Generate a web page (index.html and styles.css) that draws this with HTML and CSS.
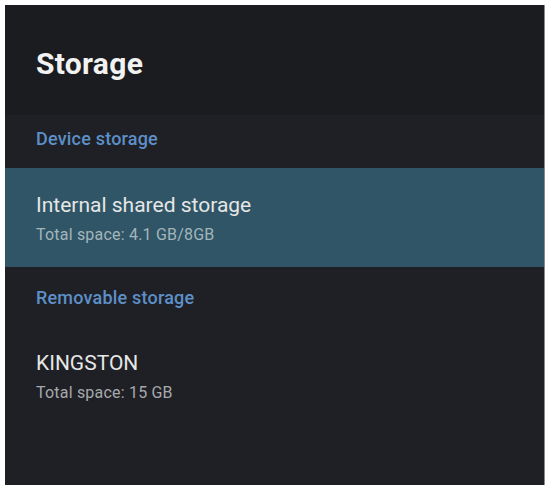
FILE: index.html
```html
<!DOCTYPE html>
<html>
<head>
<meta charset="utf-8">
<link rel="stylesheet" href="styles.css">
</head>
<body>
<div class="panel">
  <header class="header"><h1 class="title">Storage</h1></header>
  <div class="list">
    <div class="section section-first">Device storage</div>
    <div class="item item-active">
      <div class="item-title">Internal shared storage</div>
      <div class="item-sub">Total space: 4.1 GB/8GB</div>
    </div>
    <div class="section section-second">Removable storage</div>
    <div class="item">
      <div class="item-title">KINGSTON</div>
      <div class="item-sub">Total space: 15 GB</div>
    </div>
  </div>
</div>
</body>
</html>
```
FILE: styles.css
```css
html, body {
  margin: 0;
  padding: 0;
  background: #ffffff;
}
body {
  padding: 5px;
  font-family: Roboto, "Liberation Sans", sans-serif;
}
.panel {
  width: 540px;
  height: 480px;
  background: #1f2025;
  display: flex;
  flex-direction: column;
  border-right: 1px solid #8a8a8a;
  box-sizing: border-box;
}
.header {
  height: 110px;
  background: #1b1c1f;
  padding: 44px 0 0 31px;
  box-sizing: border-box;
}
.title {
  margin: 0;
  font-size: 30px;
  line-height: 30px;
  font-weight: 700;
  letter-spacing: 0.3px;
  color: #f2f2f2;
}
.list {
  display: flex;
  flex-direction: column;
}
.section {
  font-size: 18px;
  line-height: 24px;
  font-weight: 500;
  letter-spacing: 0.2px;
  color: #5d8fc8;
  padding-left: 31px;
  box-sizing: border-box;
}
.section-first {
  height: 53px;
  padding-top: 12px;
}
.section-second {
  height: 59px;
  padding-top: 19px;
}
.item {
  height: 99px;
  padding: 24px 0 0 31px;
  box-sizing: border-box;
}
.item-active {
  background: #2f5566;
}
.item-title {
  font-size: 21px;
  line-height: 26px;
  color: #e6e6e6;
}
.item-sub {
  margin-top: 7px;
  font-size: 16px;
  line-height: 20px;
  letter-spacing: 0.2px;
  color: #a6a9ab;
}
.item-active .item-sub {
  color: #a3b5bc;
}
```
